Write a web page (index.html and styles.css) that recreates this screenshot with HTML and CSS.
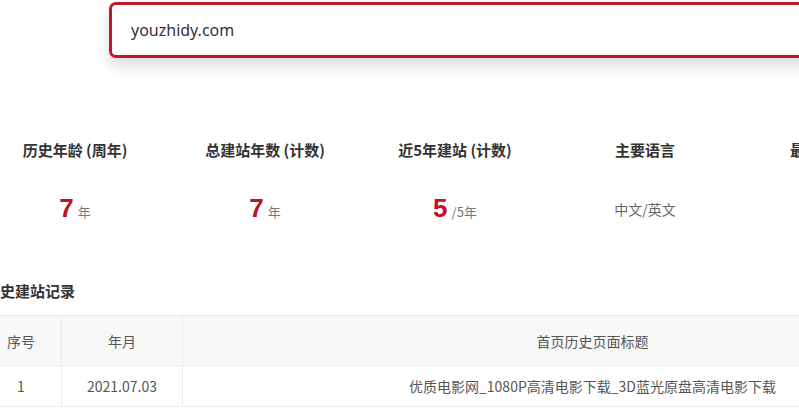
FILE: index.html
```html
<!DOCTYPE html>
<html lang="zh-CN">
<head>
    <meta charset="UTF-8">
    <title>建站历史查询</title>
    <link rel="stylesheet" href="styles.css">
</head>
<body>
    <div class="wrap">
        <div class="search-box">
            <input type="text" value="youzhidy.com">
        </div>
        <div class="stats">
            <div class="stat">
                <div class="stat-label">历史年龄 (周年)</div>
                <div class="stat-value"><b>7</b><span>年</span></div>
            </div>
            <div class="stat">
                <div class="stat-label">总建站年数 (计数)</div>
                <div class="stat-value"><b>7</b><span>年</span></div>
            </div>
            <div class="stat">
                <div class="stat-label">近5年建站 (计数)</div>
                <div class="stat-value"><b>5</b><span>/5年</span></div>
            </div>
            <div class="stat">
                <div class="stat-label">主要语言</div>
                <div class="stat-value"><span class="plain">中文/英文</span></div>
            </div>
            <div class="stat">
                <div class="stat-label">最长连续建站</div>
                <div class="stat-value"><b>7</b><span>年</span></div>
            </div>
            <div class="stat">
                <div class="stat-label">安全检测</div>
                <div class="stat-value"><span class="plain">安全</span></div>
            </div>
        </div>
        <h2 class="section-title">历史建站记录</h2>
        <table class="records">
            <colgroup>
                <col class="col-no">
                <col class="col-date">
                <col class="col-title">
                <col class="col-op">
            </colgroup>
            <thead>
                <tr>
                    <th>序号</th>
                    <th>年月</th>
                    <th>首页历史页面标题</th>
                    <th>操作</th>
                </tr>
            </thead>
            <tbody>
                <tr>
                    <td>1</td>
                    <td>2021.07.03</td>
                    <td>优质电影网_1080P高清电影下载_3D蓝光原盘高清电影下载</td>
                    <td>查看</td>
                </tr>
            </tbody>
        </table>
    </div>
</body>
</html>
```

FILE: styles.css
```css
body {
    margin: 0;
    padding: 0;
    background-color: #ffffff;
    font-family: "Noto Sans CJK SC", "Noto Sans", sans-serif;
    color: #333;
    overflow: hidden;
}
.wrap {
    width: 1140px;
    margin-left: -20px;
}
.search-box {
    margin: 2px 0 0 129px;
    height: 50px;
    border: 3px solid #c1172c;
    border-radius: 7px;
    background-color: #fff;
    box-shadow: 0 8px 16px rgba(0, 0, 0, 0.14);
    display: flex;
    align-items: center;
}
.search-box input {
    border: none;
    outline: none;
    width: 100%;
    padding: 0 19px;
    font-family: "Noto Sans", sans-serif;
    font-size: 16px;
    color: #333;
    background: transparent;
}
.stats {
    display: grid;
    grid-template-columns: repeat(6, 190px);
    margin-top: 82px;
}
.stat {
    text-align: center;
}
.stat-label {
    font-size: 15px;
    font-weight: bold;
    line-height: 20px;
    color: #333;
}
.stat-value {
    margin-top: 33px;
    line-height: 30px;
    height: 30px;
}
.stat-value b {
    font-family: "Liberation Sans", sans-serif;
    font-size: 26px;
    color: #c40f24;
    margin-right: 4px;
}
.stat-value span {
    font-size: 13px;
    color: #777;
}
.stat-value span.plain {
    font-size: 14px;
    color: #666;
}
.section-title {
    margin: 58px 0 0 5px;
    font-size: 15px;
    font-weight: bold;
    line-height: 20px;
    color: #333;
}
.records {
    margin-top: 14px;
    width: 1140px;
    table-layout: fixed;
    border-collapse: collapse;
    font-size: 14px;
    color: #555;
}
.records th,
.records td {
    border: 1px solid #ebebeb;
    text-align: center;
    font-weight: normal;
    padding: 0;
}
.records th {
    height: 49px;
    background-color: #f8f8f8;
}
.records td {
    height: 40px;
}
.col-no {
    width: 81px;
}
.col-date {
    width: 121px;
}
.col-title {
    width: 820px;
}
.col-op {
    width: 118px;
}
```
